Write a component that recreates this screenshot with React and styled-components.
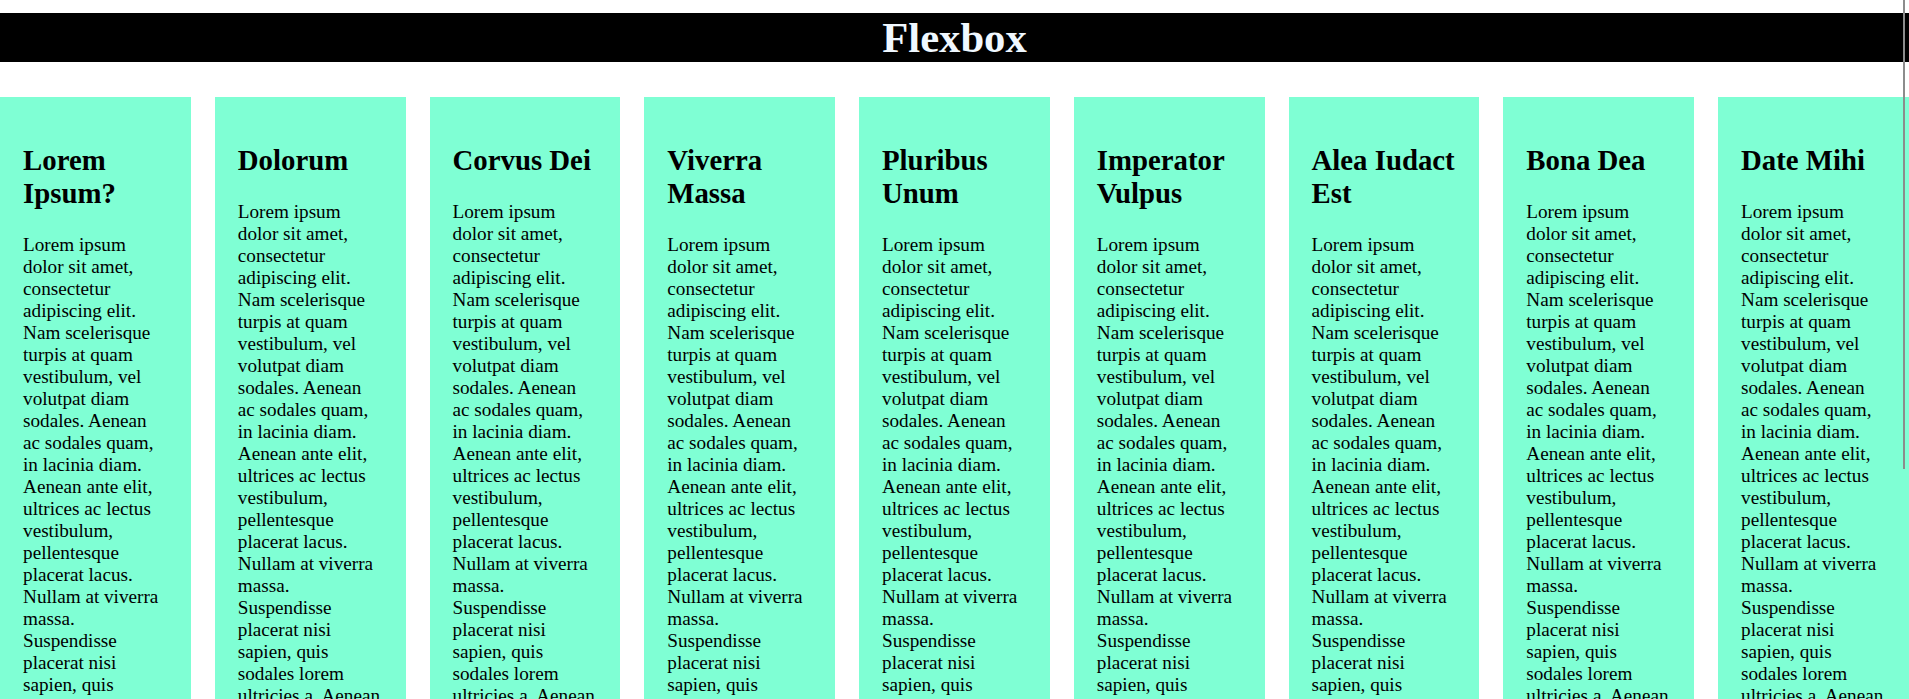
import React from "react";
import styled, { createGlobalStyle } from "styled-components";

const GlobalStyle = createGlobalStyle`
  html, body {
    margin: 0;
    padding: 0;
    overflow: hidden;
    background: #ffffff;
  }
  body {
    font-family: "Liberation Serif", "Times New Roman", serif;
    color: #000000;
  }
`;

const Page = styled.div`
  display: flex;
  flex-direction: column;
  width: 100%;
`;

const Title = styled.h1`
  margin: 13px 0 35px;
  background: #000000;
  color: #f0f8ff;
  text-align: center;
  font-size: 42.67px;
  font-weight: bold;
  line-height: 49px;
`;

const Columns = styled.main`
  display: flex;
  justify-content: space-between;
  align-items: stretch;
`;

const Card = styled.section`
  width: 10%;
  box-sizing: border-box;
  background: #7fffd4;
  font-size: 19.2px;
  padding: 1.2em;
`;

const CardTitle = styled.h2`
  font-size: 1.5em;
  font-weight: bold;
  margin: 0.83em 0;
  line-height: normal;
`;

const CardText = styled.p`
  margin: 1em 0;
  line-height: normal;
`;

const ScrollThumb = styled.div`
  position: fixed;
  top: 0;
  right: 4px;
  width: 2px;
  height: 469px;
  background: #8c8c8c;
`;

const TEXT =
  "Lorem ipsum dolor sit amet, consectetur adipiscing elit. Nam scelerisque turpis at quam vestibulum, vel volutpat diam sodales. Aenean ac sodales quam, in lacinia diam. Aenean ante elit, ultrices ac lectus vestibulum, pellentesque placerat lacus. Nullam at viverra massa. Suspendisse placerat nisi sapien, quis sodales lorem ultricies a. Aenean eget lorem at mauris laoreet pulvinar sed vel dolor. Donec vitae ante at nunc euismod tincidunt.";

const titles = [
  "Lorem Ipsum?",
  "Dolorum",
  "Corvus Dei",
  "Viverra Massa",
  "Pluribus Unum",
  "Imperator Vulpus",
  "Alea Iudact Est",
  "Bona Dea",
  "Date Mihi",
];

export default function App() {
  return (
    <Page>
      <GlobalStyle />
      <Title>Flexbox</Title>
      <Columns>
        {titles.map((t) => (
          <Card key={t}>
            <CardTitle>{t}</CardTitle>
            <CardText>{TEXT}</CardText>
          </Card>
        ))}
      </Columns>
      <ScrollThumb />
    </Page>
  );
}
